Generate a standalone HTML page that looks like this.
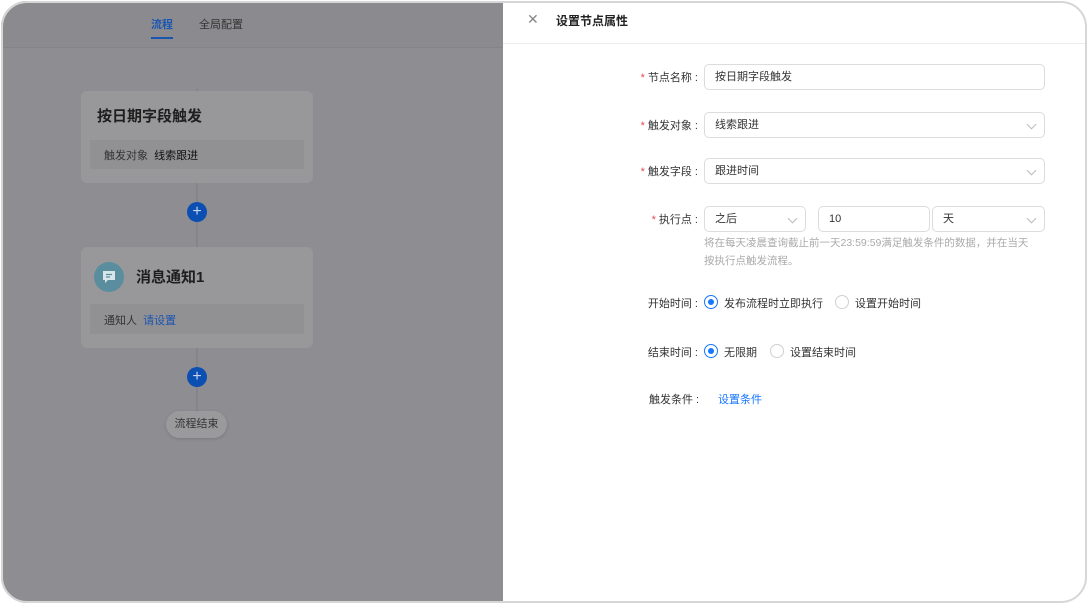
<!DOCTYPE html>
<html><head><meta charset="utf-8"><style>
*{box-sizing:border-box;margin:0;padding:0}
body{width:1088px;height:604px;background:#fff;font-family:"Liberation Sans","Noto Sans CJK SC",sans-serif;position:relative;overflow:hidden}
.frame{position:absolute;left:1px;top:1px;width:1086px;height:602px;border-radius:26px;overflow:hidden;background:#fff}
.bord{position:absolute;left:1px;top:1px;width:1086px;height:602px;border:2px solid #d6d6d6;border-radius:26px;pointer-events:none}
.left{position:absolute;left:0;top:0;width:502px;height:100%;background:#8e8e92}
.hdr{position:absolute;left:0;top:0;width:100%;height:47px;background:#8b8b8f;border-bottom:1px solid #858589}
.a{position:absolute;white-space:nowrap}
.card{position:absolute;background:#98989b;border-radius:6px}
.row{position:absolute;background:#919194;left:9px;right:9px}
.line{position:absolute;left:195px;width:2px;background:#858588}
.plus{position:absolute;width:20px;height:20px;border-radius:50%;background:#0c4fb3;color:#c8d6ee;font-size:16px;line-height:19px;text-align:center}
.lbl{position:absolute;right:389px;font-size:11px;color:#333;white-space:nowrap}
.lbl b{color:#e5484d;font-weight:normal;margin-right:3px}
.inp{position:absolute;height:26px;border:1px solid #dcdcdc;border-radius:5px;font-size:11px;color:#333;padding:0 10px;line-height:24px}
.chev{position:absolute;right:9px;top:8px;width:7px;height:7px;border-right:1px solid #bbb;border-bottom:1px solid #bbb;transform:rotate(45deg)}
.rad{position:absolute;width:14px;height:14px;border-radius:50%;border:1px solid #d0d0d0}
.rad.on{border-color:#1677ff}
.rad.on:after{content:"";position:absolute;left:3px;top:3px;width:6px;height:6px;border-radius:50%;background:#1677ff}
.t{position:absolute;font-size:11px;color:#333;white-space:nowrap}
</style></head><body>
<div class="frame">
<div class="left">
 <div class="hdr">
  <div class="a" style="left:150px;top:15px;font-size:11px;color:#1a55b0;font-weight:bold">流程</div>
  <div class="a" style="left:150px;top:36px;width:22px;height:2px;background:#1a55b0"></div>
  <div class="a" style="left:198px;top:15px;font-size:11px;color:#333">全局配置</div>
 </div>
 <div class="line" style="top:88px;height:4px"></div>
 <div class="line" style="top:182px;height:66px"></div>
 <div class="line" style="top:346px;height:68px"></div>
 <div class="card" style="left:80px;top:90px;width:232px;height:92px">
  <div class="a" style="left:16px;top:14px;font-size:15px;font-weight:bold;color:#1e1e1e">按日期字段触发</div>
  <div class="row" style="top:49px;height:29px"><div class="a" style="left:14px;top:7px;font-size:11px;color:#333">触发对象 &nbsp;<span style="color:#111">线索跟进</span></div></div>
 </div>
 <div class="plus" style="left:186px;top:201px">+</div>
 <div class="card" style="left:80px;top:246px;width:232px;height:101px">
  <div class="a" style="left:13px;top:15px;width:30px;height:30px;border-radius:50%;background:#5a8e9f"><svg width="30" height="30" viewBox="0 0 30 30"><path d="M9 9h12v9h-7l-3 3v-3h-2z" fill="#d8e6ea"/><path d="M12 12.5h6M12 15h4" stroke="#5a8e9f" stroke-width="1.3"/></svg></div>
  <div class="a" style="left:55px;top:19px;font-size:15px;font-weight:bold;color:#1e1e1e">消息通知1</div>
  <div class="row" style="top:57px;height:30px"><div class="a" style="left:14px;top:8px;font-size:11px;color:#333">通知人 &nbsp;<span style="color:#1a55b0">请设置</span></div></div>
 </div>
 <div class="plus" style="left:186px;top:366px">+</div>
 <div class="a" style="left:165px;top:410px;width:61px;height:27px;border-radius:14px;background:#9a9a9d;box-shadow:0 1px 3px rgba(0,0,0,.15);font-size:11px;color:#333;text-align:center;line-height:27px">流程结束</div>
</div>
<div class="a" style="left:502px;top:42px;width:585px;height:1px;background:#ececec"></div>
<div class="a" style="left:526px;top:10px;font-size:14px;color:#888;font-weight:300">✕</div>
<div class="a" style="left:555px;top:11px;font-size:12px;font-weight:bold;color:#222">设置节点属性</div>

<div class="lbl" style="top:68px"><b>*</b>节点名称 :</div>
<div class="inp" style="left:703px;top:63px;width:341px">按日期字段触发</div>
<div class="lbl" style="top:116px"><b>*</b>触发对象 :</div>
<div class="inp" style="left:703px;top:111px;width:341px">线索跟进<i class="chev"></i></div>
<div class="lbl" style="top:162px"><b>*</b>触发字段 :</div>
<div class="inp" style="left:703px;top:157px;width:341px">跟进时间<i class="chev"></i></div>
<div class="lbl" style="top:210px"><b>*</b>执行点 :</div>
<div class="inp" style="left:703px;top:205px;width:102px">之后<i class="chev"></i></div>
<div class="inp" style="left:817px;top:205px;width:112px">10</div>
<div class="inp" style="left:931px;top:205px;width:113px">天<i class="chev"></i></div>
<div class="t" style="left:703px;top:233px;color:#aaa;line-height:18px;font-size:10.5px">将在每天凌晨查询截止前一天23:59:59满足触发条件的数据，并在当天<br>按执行点触发流程。</div>

<div class="lbl" style="top:294px">开始时间 :</div>
<div class="rad on" style="left:703px;top:294px"></div>
<div class="t" style="left:723px;top:294px">发布流程时立即执行</div>
<div class="rad" style="left:834px;top:294px"></div>
<div class="t" style="left:854px;top:294px">设置开始时间</div>
<div class="lbl" style="top:343px">结束时间 :</div>
<div class="rad on" style="left:703px;top:343px"></div>
<div class="t" style="left:723px;top:343px">无限期</div>
<div class="rad" style="left:769px;top:343px"></div>
<div class="t" style="left:789px;top:343px">设置结束时间</div>
<div class="t" style="left:648px;top:390px">触发条件 :</div>
<div class="t" style="left:717px;top:390px;color:#1677ff">设置条件</div>
</div>
<div class="bord"></div>
</body></html>
